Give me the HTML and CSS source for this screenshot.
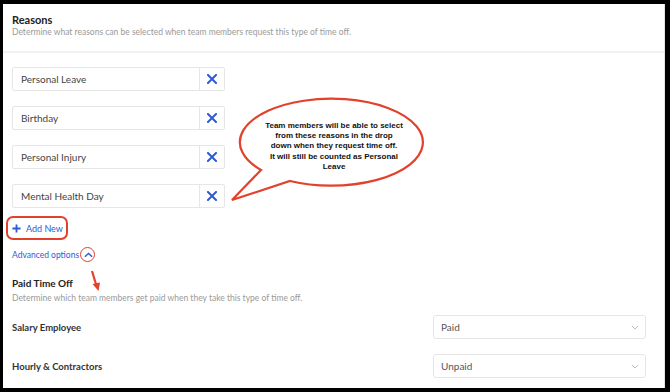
FILE: index.html
```html
<!DOCTYPE html>
<html>
<head>
<meta charset="utf-8">
<link rel="stylesheet" href="styles.css">
</head>
<body>
<div class="frame">
  <div class="header">
    <div class="title">Reasons</div>
    <div class="sub">Determine what reasons can be selected when team members request this type of time off.</div>
  </div>
  <div class="content">
    <div class="reasons">
      <div class="row"><div class="field">Personal Leave</div><div class="del"><svg viewBox="0 0 10 10" width="10" height="10"><path d="M1 1L9 9M9 1L1 9" stroke="#2d5bd6" stroke-width="2" stroke-linecap="square"/></svg></div></div>
      <div class="row"><div class="field">Birthday</div><div class="del"><svg viewBox="0 0 10 10" width="10" height="10"><path d="M1 1L9 9M9 1L1 9" stroke="#2d5bd6" stroke-width="2" stroke-linecap="square"/></svg></div></div>
      <div class="row"><div class="field">Personal Injury</div><div class="del"><svg viewBox="0 0 10 10" width="10" height="10"><path d="M1 1L9 9M9 1L1 9" stroke="#2d5bd6" stroke-width="2" stroke-linecap="square"/></svg></div></div>
      <div class="row"><div class="field">Mental Health Day</div><div class="del"><svg viewBox="0 0 10 10" width="10" height="10"><path d="M1 1L9 9M9 1L1 9" stroke="#2d5bd6" stroke-width="2" stroke-linecap="square"/></svg></div></div>
    </div>
    <div class="addnew">
      <svg viewBox="0 0 10 10" width="9" height="9"><path d="M5 0.5V9.5M0.5 5H9.5" stroke="#2d5bd6" stroke-width="2"/></svg>
      <span>Add New</span>
      <div class="ring-add"></div>
    </div>
    <div class="advanced">
      <span>Advanced options</span>
      <span class="chev">
        <svg viewBox="0 0 10 6" width="9" height="6"><path d="M1 5L5 1.2L9 5" fill="none" stroke="#2d5bd6" stroke-width="1.6"/></svg>
        <span class="ring-chev"></span>
      </span>
    </div>
    <div class="pto">
      <div class="title">Paid Time Off</div>
      <div class="sub">Determine which team members get paid when they take this type of time off.</div>
    </div>
    <div class="prow">
      <div class="plabel">Salary Employee</div>
      <div class="select"><span>Paid</span><svg viewBox="0 0 10 6" width="8" height="5"><path d="M1 1L5 5L9 1" fill="none" stroke="#b8b8b8" stroke-width="1.2"/></svg></div>
    </div>
    <div class="prow">
      <div class="plabel">Hourly &amp; Contractors</div>
      <div class="select"><span>Unpaid</span><svg viewBox="0 0 10 6" width="8" height="5"><path d="M1 1L5 5L9 1" fill="none" stroke="#b8b8b8" stroke-width="1.2"/></svg></div>
    </div>
  </div>
  <svg class="bubble" width="220" height="112" viewBox="0 0 220 112">
    <path d="M44 75 A 91.5 43.5 0 1 1 73 86 L 15 105 Z" fill="#fff" stroke="#e2412b" stroke-width="2.2" stroke-linejoin="miter"/>
  </svg>
  <div class="bubble-text">Team members will be able to select<br>from these reasons in the drop<br>down when they request time off.<br>It will still be counted as Personal<br>Leave</div>
  <svg class="arrow" width="20" height="30" viewBox="0 0 20 30">
    <path d="M4 2L8.5 17" stroke="#e2412b" stroke-width="2.2" fill="none"/>
    <path d="M4.5 15L12 13.5L10.5 22Z" fill="#e2412b"/>
  </svg>
</div>
</body>
</html>
```

FILE: styles.css
```css
html, body {
  margin: 0;
  padding: 0;
  background: #000;
}
body {
  width: 670px;
  height: 392px;
  overflow: hidden;
  font-family: "Lato", "Open Sans", sans-serif;
}
.frame {
  position: relative;
  margin: 4px 5px 0 3px;
  width: 661px;
  height: 384px;
  background: #fff;
  border-right: 1px solid #e4e4e4;
  overflow: hidden;
}
.header {
  padding: 9px 9px 0;
  height: 38px;
  border-bottom: 2px solid #f1f1f1;
}
.title {
  font-size: 11px;
  font-weight: 700;
  color: #222;
  line-height: 13px;
}
.sub {
  font-size: 8.5px;
  color: #9a9a9a;
  line-height: 12px;
}
.content {
  padding: 14px 9px 0;
}
.reasons {
  display: flex;
  flex-direction: column;
  gap: 15px;
}
.row {
  display: flex;
  width: 211px;
  height: 22px;
  border: 1px solid #e6e6e6;
  border-radius: 2px;
}
.field {
  flex: 1;
  display: flex;
  align-items: center;
  padding-left: 8px;
  font-size: 10px;
  color: #444;
  border-right: 1px solid #e6e6e6;
}
.del {
  width: 24px;
  display: flex;
  align-items: center;
  justify-content: center;
}
.addnew {
  position: relative;
  margin-top: 10px;
  display: flex;
  align-items: center;
  gap: 5px;
  height: 20px;
  font-size: 9px;
  color: #2d5bd6;
}
.ring-add {
  position: absolute;
  left: -6px;
  top: -2px;
  width: 58px;
  height: 20px;
  border: 2px solid #e2412b;
  border-radius: 7px;
}
.advanced {
  margin-top: 10px;
  display: flex;
  align-items: center;
  height: 14px;
  font-size: 8.5px;
  color: #2d5bd6;
}
.chev {
  position: relative;
  width: 14px;
  height: 14px;
  margin-left: 2px;
  display: flex;
  align-items: center;
  justify-content: center;
}
.ring-chev {
  position: absolute;
  left: -1px;
  top: -1px;
  width: 13px;
  height: 13px;
  border: 1.5px solid #e2412b;
  border-radius: 50%;
}
.pto {
  margin-top: 15px;
}
.pto .title {
  font-size: 10px;
}
.pto .sub {
  margin-top: 2px;
}
.prow {
  display: flex;
  align-items: center;
  justify-content: space-between;
  height: 24px;
  margin-top: 15px;
}
.pto + .prow {
  margin-top: 11px;
}
.plabel {
  font-size: 9.5px;
  font-weight: 700;
  color: #333;
}
.select {
  box-sizing: border-box;
  width: 213px;
  height: 24px;
  margin-right: 9px;
  border: 1px solid #e6e6e6;
  border-radius: 3px;
  display: flex;
  align-items: center;
  justify-content: space-between;
  padding: 0 6px 0 7px;
  font-size: 10px;
  color: #555;
}
.bubble {
  position: absolute;
  left: 214px;
  top: 91px;
}
.bubble-text {
  position: absolute;
  left: 246px;
  top: 117px;
  width: 170px;
  text-align: center;
  font-family: "Liberation Sans", Arial, sans-serif;
  font-weight: 700;
  font-size: 8px;
  line-height: 10.2px;
  color: #111;
}
.arrow {
  position: absolute;
  left: 85px;
  top: 265px;
}
```
